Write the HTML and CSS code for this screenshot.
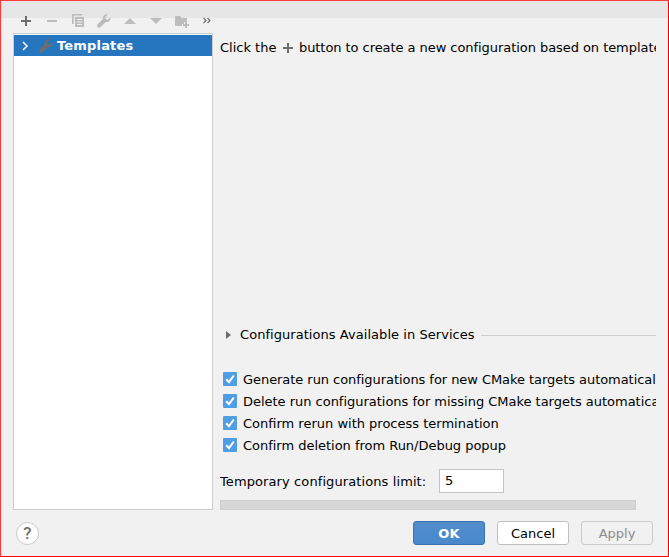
FILE: index.html
```html
<!DOCTYPE html>
<html lang="en">
<head>
<meta charset="utf-8">
<title>Run/Debug Configurations</title>
<link rel="stylesheet" href="styles.css">
</head>
<body>
<div class="dialog">
  <header class="toolbar">
    <svg class="icon dark" viewBox="0 0 16 16"><path d="M7 3h2v4h4v2H9v4H7V9H3V7h4z"/></svg>
    <svg class="icon" viewBox="0 0 16 16"><path d="M3 7h10v2H3z"/></svg>
    <svg class="icon" viewBox="0 0 16 16"><path d="M2 1h10v1.500H3.700V11H2z"/><path fill-rule="evenodd" d="M5 4h9v10H5zM7 6v1h5V6zM7 8.500v1h5v-1zM7 11v1h5v-1z"/></svg>
    <svg class="icon" viewBox="0 0 16 16"><path d="M14.400 4.200 11.800 6.500 9.700 6 9.400 4 12 1.500C9.400.7 6.300 2.700 6.800 6L1.300 11.500Q.6 13.200 1.600 14.200Q2.800 15.200 4.300 14.300L9.900 8.900C13 9.500 15.100 7 14.400 4.200z"/></svg>
    <svg class="icon" viewBox="0 0 16 16"><path d="M8 5 14 11H2z"/></svg>
    <svg class="icon" viewBox="0 0 16 16"><path d="M2 5h12L8 11z"/></svg>
    <svg class="icon" viewBox="0 0 16 16"><path d="M1 3h5l2 2h5v4h-3v2H8v2H1z"/><path d="M11 9h2v2h2v2h-2v2h-2v-2H9v-2h2z"/></svg>
    <svg class="icon more" viewBox="0 0 16 16"><path d="M4.500 5 7 7.500 4.500 10M8.500 5 11 7.500 8.500 10"/></svg>
  </header>
  <main class="content">
    <nav class="tree">
      <div class="tree-row">
        <svg class="chevron" viewBox="0 0 8 10"><path d="M2 1 6 5 2 9"/></svg>
        <svg class="icon wrench" viewBox="0 0 16 16"><path d="M14.400 4.200 11.800 6.500 9.700 6 9.400 4 12 1.500C9.400.7 6.300 2.700 6.800 6L1.300 11.500Q.6 13.200 1.600 14.200Q2.800 15.200 4.300 14.300L9.900 8.900C13 9.500 15.100 7 14.400 4.200z"/></svg>
        <span>Templates</span>
      </div>
    </nav>
    <section class="details">
      <p class="hint"><span>Click the</span><svg class="icon hint-plus" viewBox="0 0 16 16"><path d="M7 3h2v4h4v2H9v4H7V9H3V7h4z"/></svg><span class="tight">button to create a new configuration based on templates</span></p>
      <div class="services">
        <svg class="disclosure" viewBox="0 0 5 8"><path d="M0 0 5 4 0 8z"/></svg>
        <span>Configurations Available in Services</span>
        <i class="rule"></i>
      </div>
      <div class="checks">
        <div class="check"><svg class="box" viewBox="0 0 14 14"><path d="M3.200 7.300 6 10.200 10.800 3.500"/></svg><span class="tight">Generate run configurations for new CMake targets automatically</span></div>
        <div class="check"><svg class="box" viewBox="0 0 14 14"><path d="M3.200 7.300 6 10.200 10.800 3.500"/></svg><span class="snug">Delete run configurations for missing CMake targets automatically</span></div>
        <div class="check"><svg class="box" viewBox="0 0 14 14"><path d="M3.200 7.300 6 10.200 10.800 3.500"/></svg><span>Confirm rerun with process termination</span></div>
        <div class="check"><svg class="box" viewBox="0 0 14 14"><path d="M3.200 7.300 6 10.200 10.800 3.500"/></svg><span class="snug">Confirm deletion from Run/Debug popup</span></div>
      </div>
      <div class="limit"><span>Temporary configurations limit:</span><div class="field">5</div></div>
      <div class="scrollbar"></div>
    </section>
  </main>
  <footer class="footer">
    <div class="help">?</div>
    <div class="button primary">OK</div>
    <div class="button">Cancel</div>
    <div class="button disabled">Apply</div>
  </footer>
</div>
</body>
</html>
```
FILE: styles.css
```css
* { box-sizing: border-box; }
body {
  margin: 0;
  font: 13px/16px "DejaVu Sans", sans-serif;
  color: #000;
}
.dialog {
  width: 669px;
  height: 557px;
  border: 1px solid #f00;
  border-top-color: #ff3838;
  border-left-color: #ff3838;
  background: linear-gradient(#e6e6e6 17px, #f1f1f1 17px);
  overflow: hidden;
  display: flex;
  flex-direction: column;
  white-space: nowrap;
}
.icon { width: 16px; height: 16px; fill: #bdbdbd; flex: none; }
.icon.dark { fill: #6e6e6e; }
.icon.more { fill: none; stroke: #6e6e6e; stroke-width: 1.200; margin-left: -1.500px; }
.toolbar {
  height: 32px;
  padding: 12px 0 0 17px;
  display: flex;
  gap: 10px;
}
.content {
  height: 477px;
  padding: 0 12px;
  display: flex;
  gap: 7px;
}
.tree {
  width: 200px;
  flex: none;
  border: 1px solid #cdcdcd;
  background: #fff;
  padding-top: 1px;
}
.tree-row {
  height: 21px;
  padding-left: 7px;
  display: flex;
  align-items: center;
  background: #2675bf;
  color: #fff;
  font-weight: bold;
  letter-spacing: 0.180px;
}
.chevron { width: 8px; height: 10px; fill: none; stroke: #fff; stroke-width: 1.600; }
.tree-row .wrench { margin: 0 3px 0 9px; fill: #6e6e6e; }
.details {
  width: 436px;
  overflow: hidden;
  display: flex;
  flex-direction: column;
}
.tight { letter-spacing: -0.056px; }
.snug { letter-spacing: -0.020px; }
.hint { margin: 7px 0 0; height: 16px; display: flex; }
.hint .hint-plus { margin: 0 3px 0 3.500px; fill: #6e6e6e; }
.services {
  height: 16px;
  margin-top: 271px;
  padding-left: 6px;
  display: flex;
  align-items: center;
  letter-spacing: 0.050px;
}
.disclosure { width: 5px; height: 8px; margin-right: 9px; fill: #6e6e6e; }
.rule { flex: 1; height: 1px; margin-left: 6px; background: #cfcfcf; }
.checks { margin-top: 25px; padding-left: 3px; }
.check { height: 22px; display: flex; align-items: center; gap: 6px; }
.check span { padding-top: 2px; }
.box {
  width: 14px;
  height: 14px;
  flex: none;
  background: #4f9de3;
  border-radius: 1px;
  fill: none;
  stroke: #fff;
  stroke-width: 2;
}
.limit { margin-top: 13px; height: 24px; display: flex; align-items: center; justify-content: space-between; width: 284px; }
.limit span { padding-top: 2px; letter-spacing: 0.100px; }
.field {
  width: 65px;
  height: 24px;
  padding: 3px 5px;
  border: 1px solid #c4c4c4;
  background: #fff;
}
.scrollbar { width: 416px; height: 10px; margin-top: 7px; background: #d6d6d6; border: 1px solid #d0d0d0; flex: none; }
.footer { display: flex; gap: 12px; padding: 11px 15px 0; }
.help {
  width: 23px;
  height: 23px;
  margin: 1px auto 0 0;
  border: 1px solid #c8c8c8;
  border-radius: 50%;
  background: #fff;
  color: #6e6e6e;
  font: 500 17px/21px "Roboto", sans-serif;
  text-align: center;
}
.button {
  width: 72px;
  height: 24px;
  border: 1px solid #c0c0c0;
  border-radius: 3px;
  background: #fff;
  line-height: 23px;
  text-align: center;
}
.primary { background: linear-gradient(#528ccb, #4989cb); border-color: #3b73b0; color: #fff; font-weight: bold; letter-spacing: 0.300px; }
.disabled { background: #f1f1f1; border-color: #cbcbcb; color: #8c8c8c; }
```
